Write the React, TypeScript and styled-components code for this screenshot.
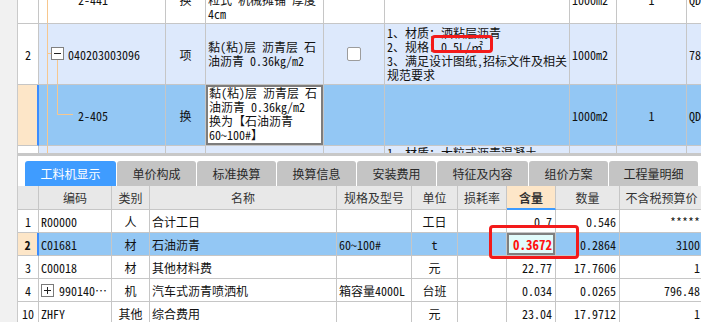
import React from "react";
import styled, { createGlobalStyle } from "styled-components";

const GlobalStyle = createGlobalStyle`
  html, body { margin: 0; padding: 0; background: #fff; }
  body {
    font-family: "Noto Sans Mono CJK SC", "Liberation Mono", "Noto Sans CJK SC", monospace;
    font-size: 12px;
    color: #111;
  }
`;

type Tone = "white" | "pale" | "sel" | "peach" | "head" | "edit";
const tones: Record<Tone, string> = {
  white: "#ffffff",
  pale: "#dde9fc",
  sel: "#93c7f4",
  peach: "#fde6c8",
  head: "#e8e8e8",
  edit: "#e1fbfb",
};

const Page = styled.div`
  display: flex;
  width: 701px;
  height: 322px;
  overflow: hidden;
`;

const Strip = styled.div`
  flex: none;
  width: 17px;
  background: #f1f1f1;
  border-right: 1px solid #cacaca;
`;

const Main = styled.div`
  flex: 1;
  min-width: 0;
  display: flex;
  flex-direction: column;
  overflow: hidden;
`;

const TopPane = styled.div`
  flex: none;
  height: 153px;
  overflow: hidden;
`;

const TopGrid = styled.div`
  display: grid;
  width: max-content;
  grid-template-columns: 21px 127px 40px 118px 61px 185px 47px 70px 60px;
  grid-template-rows: 48px 61px 61px 40px;
  margin-top: -24px;
`;

const Cell = styled.div<{ $tone?: Tone; $align?: "left" | "center" | "right" }>`
  box-sizing: border-box;
  min-width: 0;
  display: flex;
  align-items: center;
  justify-content: ${(p) =>
    p.$align === "center" ? "center" : p.$align === "right" ? "flex-end" : "flex-start"};
  padding: 0 2px;
  border-right: 1px solid #c6c6c6;
  border-bottom: 1px solid #c6c6c6;
  background: ${(p) => tones[p.$tone ?? "white"]};
  white-space: nowrap;
`;

const RowNum = styled(Cell)<{ $active?: boolean }>`
  justify-content: center;
  padding: 0;
  font-weight: ${(p) => (p.$active ? 700 : 400)};
  border-right: ${(p) => (p.$active ? "2px solid #3b8cff" : "1px solid #c6c6c6")};
`;

const CodeCell = styled(Cell)`
  padding: 0;
  overflow: hidden;
`;

const Lines = styled(Cell)<{ $top?: boolean }>`
  flex-direction: column;
  align-items: flex-start;
  justify-content: ${(p) => (p.$top ? "flex-start" : "center")};
  line-height: 14px;
  overflow: hidden;
  position: relative;
`;

const EditBox = styled(Lines)`
  background: #fff;
  box-shadow: inset 0 0 0 2px #7d7d7d;
  padding: 1px 3px;
`;

const Check = styled.span`
  width: 12px;
  height: 12px;
  border: 1px solid #9c9c9c;
  border-radius: 2px;
  background: #fff;
`;

const RedMark = styled.span<{ $l: number; $t: number; $w: number; $h: number }>`
  position: absolute;
  left: ${(p) => p.$l}px;
  top: ${(p) => p.$t}px;
  width: ${(p) => p.$w}px;
  height: ${(p) => p.$h}px;
  box-sizing: border-box;
  border: 3px solid #f31a1a;
  border-radius: 4px;
  z-index: 2;
`;

const Separator = styled.div`
  flex: none;
  height: 3px;
  background: #c8c8c8;
`;

const TabBar = styled.div`
  flex: none;
  display: flex;
  gap: 1px;
  height: 30px;
  box-sizing: border-box;
  padding: 5px 0 0 7px;
`;

const Tab = styled.div<{ $w: number; $active?: boolean }>`
  flex: none;
  width: ${(p) => p.$w}px;
  height: 25px;
  border-radius: 3px 3px 0 0;
  display: flex;
  align-items: center;
  justify-content: center;
  font-family: "Noto Sans CJK SC", sans-serif;
  font-size: 12px;
  background: ${(p) => (p.$active ? "#3f9cff" : "#c4c4c4")};
  color: ${(p) => (p.$active ? "#fff" : "#2a2a2a")};
`;

const BottomGrid = styled.div`
  display: grid;
  width: max-content;
  grid-template-columns: 21px 73px 38px 187px 75px 46px 49px 49px 64px 84px;
  grid-template-rows: 24px repeat(5, 23px);
`;

const Head = styled(Cell)<{ $hot?: boolean }>`
  justify-content: center;
  color: #333;
  background: ${(p) => (p.$hot ? "#fde6c8" : "#e8e8e8")};
  font-weight: ${(p) => (p.$hot ? 700 : 400)};
  border-bottom: ${(p) => (p.$hot ? "2px solid #3d9bff" : "1px solid #c6c6c6")};
`;

const Amount = styled(Cell)<{ $focus?: boolean }>`
  justify-content: flex-end;
  padding-right: 3px;
  position: relative;
  ${(p) =>
    p.$focus &&
    `
    background: #e1fbfb;
    box-shadow: inset 0 0 0 2px #7f7f7f;
    color: #ff1010;
    font-weight: 700;
    font-size: 13px;
  `}
`;

const Expander = styled.svg`
  flex: none;
  margin: 0 5px 0 0;
`;

const Tree = ({ w, h, kind }: { w: number; h: number; kind: "trunk" | "parent" | "child" }) => (
  <svg width={w} height={h} style={{ flex: "none" }}>
    <line x1={8.5} y1={0} x2={8.5} y2={h} stroke="#f7c78e" />
    {kind === "parent" && (
      <>
        <line x1={8.5} y1={29.5} x2={12.5} y2={29.5} stroke="#f7c78e" />
        <line x1={18.5} y1={36} x2={18.5} y2={h} stroke="#f7c78e" />
        <rect x={12.5} y={23.5} width={12} height={12} fill="#fff" stroke="#808080" />
        <line x1={15} y1={29.5} x2={22} y2={29.5} stroke="#222" />
      </>
    )}
    {kind === "child" && (
      <>
        <line x1={18.5} y1={0} x2={18.5} y2={29.5} stroke="#f7c78e" />
        <line x1={18.5} y1={29.5} x2={34} y2={29.5} stroke="#f7c78e" />
      </>
    )}
  </svg>
);

const tabs: [string, number][] = [
  ["工料机显示", 91],
  ["单价构成", 79],
  ["标准换算", 79],
  ["换算信息", 79],
  ["安装费用", 79],
  ["特征及内容", 91],
  ["组价方案", 79],
  ["工程量明细", 89],
];

const heads = ["", "编码", "类别", "名称", "规格及型号", "单位", "损耗率", "含量", "数量", "不含税预算价"];

type Item = {
  no: string;
  code: string;
  kind: string;
  name: string;
  spec: string;
  unit: string;
  qty: string;
  total: string;
  price: string;
  fold?: boolean;
};

const items: Item[] = [
  { no: "1", code: "R00000", kind: "人", name: "合计工日", spec: "", unit: "工日", qty: "0.7", total: "0.546", price: "*****" },
  { no: "2", code: "C01681", kind: "材", name: "石油沥青", spec: "60~100#", unit: "t", qty: "0.3672", total: "0.2864", price: "3100" },
  { no: "3", code: "C00018", kind: "材", name: "其他材料费", spec: "", unit: "元", qty: "22.77", total: "17.7606", price: "1" },
  { no: "4", code: "990140…", kind: "机", name: "汽车式沥青喷洒机", spec: "箱容量4000L", unit: "台班", qty: "0.034", total: "0.0265", price: "796.48", fold: true },
  { no: "10", code: "ZHFY", kind: "其他", name: "综合费用", spec: "", unit: "元", qty: "23.04", total: "17.9712", price: "1" },
];

export default function App() {
  return (
    <Page>
      <GlobalStyle />
      <Strip />
      <Main>
        <TopPane>
          <TopGrid>
            {/* row 1, mostly scrolled out of view */}
            <RowNum />
            <CodeCell>
              <Tree w={39} h={48} kind="trunk" />
              2-441
            </CodeCell>
            <Cell $align="center">换</Cell>
            <Lines>
              <span>沥青混凝土 中</span>
              <span>粒式 机械摊铺 厚度</span>
              <span>4cm</span>
            </Lines>
            <Cell />
            <Cell />
            <Cell>1000m2</Cell>
            <Cell $align="center">1</Cell>
            <Cell>QD</Cell>

            {/* row 2 */}
            <RowNum>2</RowNum>
            <CodeCell $tone="pale">
              <Tree w={29} h={61} kind="parent" />
              040203003096
            </CodeCell>
            <Cell $tone="pale" $align="center">项</Cell>
            <Lines $tone="pale">
              <span>黏(粘)层 沥青层 石</span>
              <span>油沥青 0.36kg/m2</span>
            </Lines>
            <Cell $tone="pale" $align="center">
              <Check />
            </Cell>
            <Lines $tone="pale">
              <span>1、材质：洒粘层沥青</span>
              <span>2、规格：0.5L/㎡</span>
              <span>3、满足设计图纸,招标文件及相关</span>
              <span>规范要求</span>
              <RedMark $l={46} $t={11} $w={62} $h={18} />
            </Lines>
            <Cell $tone="pale">1000m2</Cell>
            <Cell $tone="pale" />
            <Cell $tone="pale">78</Cell>

            {/* row 3 */}
            <RowNum $tone="peach" $active />
            <CodeCell $tone="sel">
              <Tree w={39} h={61} kind="child" />
              2-405
            </CodeCell>
            <Cell $tone="sel" $align="center">换</Cell>
            <EditBox $top>
              <span>黏(粘)层 沥青层 石</span>
              <span>油沥青 0.36kg/m2</span>
              <span>换为【石油沥青</span>
              <span>60~100#】</span>
            </EditBox>
            <Cell $tone="sel" />
            <Cell $tone="sel" />
            <Cell $tone="sel">1000m2</Cell>
            <Cell $tone="sel" $align="center">1</Cell>
            <Cell $tone="sel">QD</Cell>

            {/* row 4, cut off by the splitter */}
            <RowNum />
            <CodeCell $tone="pale">
              <Tree w={39} h={40} kind="trunk" />
            </CodeCell>
            <Cell $tone="pale" />
            <Cell $tone="pale" />
            <Cell $tone="pale" />
            <Lines $tone="pale" $top>
              <span>1、材质：大粒式沥青混凝土</span>
            </Lines>
            <Cell $tone="pale" />
            <Cell $tone="pale" />
            <Cell $tone="pale" />
          </TopGrid>
        </TopPane>
        <Separator />
        <TabBar>
          {tabs.map(([label, w], i) => (
            <Tab key={label} $w={w} $active={i === 0}>
              {label}
            </Tab>
          ))}
        </TabBar>
        <BottomGrid>
          {heads.map((h) => (
            <Head key={h || "no"} $hot={h === "含量"}>
              {h}
            </Head>
          ))}
          {items.map((it) => {
            const sel = it.no === "2";
            const tone: Tone = sel ? "sel" : "white";
            return (
              <React.Fragment key={it.no}>
                <RowNum $tone={sel ? "peach" : "white"} $active={sel}>
                  {it.no}
                </RowNum>
                <Cell $tone={tone}>
                  {it.fold && (
                    <Expander width={13} height={13}>
                      <rect x={0.5} y={0.5} width={12} height={12} fill="#fff" stroke="#7a7a7a" />
                      <line x1={3} y1={6.5} x2={10} y2={6.5} stroke="#222" />
                      <line x1={6.5} y1={3} x2={6.5} y2={10} stroke="#222" />
                    </Expander>
                  )}
                  {it.code}
                </Cell>
                <Cell $tone={tone} $align="center">{it.kind}</Cell>
                <Cell $tone={tone}>{it.name}</Cell>
                <Cell $tone={tone}>{it.spec}</Cell>
                <Cell $tone={tone} $align="center">{it.unit}</Cell>
                <Cell $tone={tone} />
                <Amount $tone={tone} $focus={sel}>
                  {it.qty}
                  {sel && <RedMark $l={-18} $t={-8} $w={90} $h={34} />}
                </Amount>
                <Amount $tone={tone}>{it.total}</Amount>
                <Amount $tone={tone}>{it.price}</Amount>
              </React.Fragment>
            );
          })}
        </BottomGrid>
      </Main>
    </Page>
  );
}
